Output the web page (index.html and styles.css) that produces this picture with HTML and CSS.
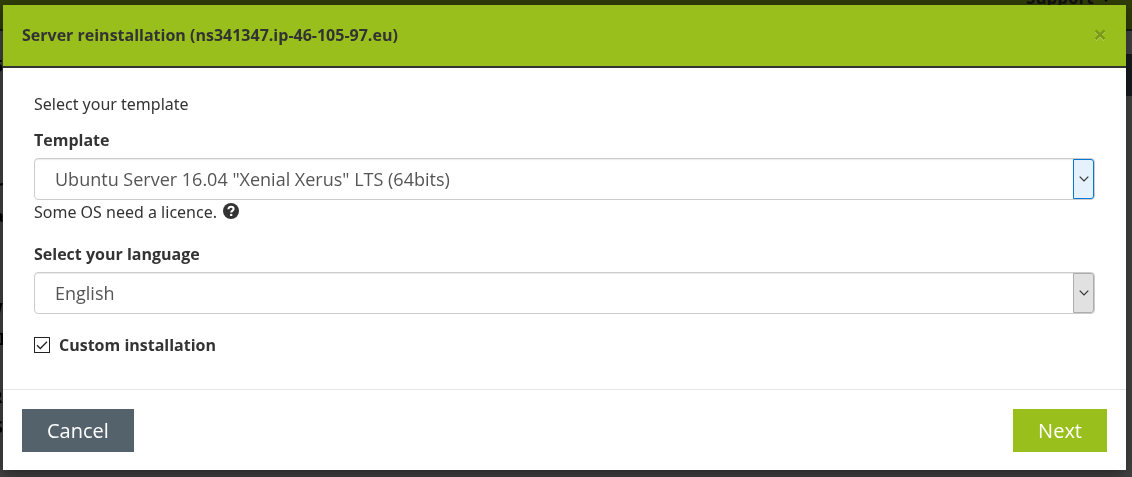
FILE: index.html
```html
<!DOCTYPE html>
<html lang="en">
<head>
<meta charset="utf-8">
<title>Server reinstallation</title>
<link rel="stylesheet" href="styles.css">
</head>
<body>
<div class="page" aria-hidden="true">
  <div class="page-nav"><span class="page-menu">Support <svg class="page-caret" viewBox="0 0 8 5"><path d="M0 0h8L4 5z"/></svg></span></div>
  <div class="page-tab"></div>
  <span class="page-text line-1">5</span>
  <span class="page-text line-2">r</span>
  <span class="page-text line-3">a</span>
  <span class="page-text line-4">W</span>
  <span class="page-text line-5">I</span>
  <span class="page-text line-6">R</span>
  <span class="page-text line-7">S</span>
</div>
<form class="modal" role="dialog" aria-labelledby="modal-title">
  <header class="modal-header">
    <h1 class="modal-title" id="modal-title">Server reinstallation (ns341347.ip-46-105-97.eu)</h1>
    <button class="close" type="button" aria-label="Close">×</button>
  </header>
  <div class="modal-body">
    <p class="intro">Select your template</p>
    <div class="field">
      <label class="label" for="template">Template</label>
      <div class="select-wrap">
        <select class="select" id="template"><option>Ubuntu Server 16.04 "Xenial Xerus" LTS (64bits)</option></select>
        <span class="arrow arrow-active"><svg class="chevron" viewBox="0 0 10 6"><path d="M0.7 0.7L5 5L9.3 0.7"/></svg></span>
      </div>
      <p class="help">Some OS need a licence.
        <svg class="help-icon" viewBox="0 0 16 16"><circle cx="8" cy="8" r="8" fill="#333"/><path d="M5.4 6.3C5.4 4.6 6.4 3.8 8 3.8S10.6 4.7 10.6 6C10.6 7.6 8.2 7.7 8.2 9.6" fill="none" stroke="#fff" stroke-width="2"/><path d="M7.1 10.9h2.2v2.1H7.1z" fill="#fff"/></svg>
      </p>
    </div>
    <div class="field">
      <label class="label" for="language">Select your language</label>
      <div class="select-wrap">
        <select class="select" id="language"><option>English</option></select>
        <span class="arrow"><svg class="chevron" viewBox="0 0 10 6"><path d="M0.7 0.7L5 5L9.3 0.7"/></svg></span>
      </div>
    </div>
    <div class="check-row">
      <span class="check">
        <input class="check-input" type="checkbox" id="custom" checked>
        <svg class="check-mark" viewBox="0 0 16 16"><path d="M3 8.2L6.3 11.5L13 4.8"/></svg>
      </span>
      <label class="check-label" for="custom">Custom installation</label>
    </div>
  </div>
  <footer class="modal-footer">
    <button class="button button-cancel" type="button">Cancel</button>
    <button class="button button-next" type="submit">Next</button>
  </footer>
</form>
</body>
</html>
```
FILE: styles.css
```css
* { box-sizing: border-box; }

body {
  margin: 0;
  padding: 5px 6px 7px 3px;
  background: #424242;
  color: #333;
  font: 16px/24px "Noto Sans", "Open Sans", sans-serif;
}

/* Dimmed page behind the dialog */
.page {
  position: fixed;
  inset: 0;
  overflow: hidden;
  color: #000;
  font-weight: bold;
}

.page-nav {
  display: flex;
  justify-content: flex-end;
  height: 31px;
  padding-right: 22px;
  border-bottom: 2px solid #191919;
  background: #303d08;
}

.page-menu { margin-top: -14px; color: #111; font-size: 17px; }
.page-caret { width: 8px; height: 5px; margin-left: 4px; vertical-align: middle; }

.page-tab {
  position: absolute;
  top: 54px;
  right: 0;
  width: 20px;
  height: 42px;
  background: #171c1e;
}

.page-text { position: absolute; left: -6px; }
.line-1 { top: 54px; }
.line-2 { top: 174px; left: -4px; }
.line-3 { top: 204px; }
.line-4 { top: 297px; left: -13px; }
.line-5 { top: 327px; left: -1px; }
.line-6 { top: 385px; left: -8px; }
.line-7 { top: 415px; }

.modal {
  position: relative;
  background: #fff;
  box-shadow: 0 5px 15px rgba(0, 0, 0, 0.4);
}

.modal-header {
  display: flex;
  align-items: center;
  justify-content: space-between;
  height: 63px;
  padding: 0 19px 2px;
  border-bottom: 2px solid #333;
  background: #99bf1c;
}

.modal-title,
.label,
.check-label {
  font: bold 16px/24px "Open Sans", "Noto Sans", sans-serif;
}

.modal-title { margin: 0; }

.close {
  padding: 0 0 2px;
  border: 0;
  background: none;
  color: #7a9916;
  font: bold 24px/24px "Noto Sans", "Open Sans", sans-serif;
  text-shadow: 0 1px 0 #b8d260;
}

.modal-body { padding: 24px 31px 32px; }
.intro { margin: 0 0 12px; }
.field { margin-bottom: 18px; }
.label { display: block; margin-bottom: 6px; }
.select-wrap { position: relative; }

.select {
  display: block;
  width: 100%;
  height: 42px;
  padding: 0 40px 0 20px;
  border: 1px solid #ccc;
  border-radius: 4px;
  appearance: none;
  background: #fff;
  box-shadow: inset 0 1px 1px rgba(0, 0, 0, 0.08);
  color: #555;
  font: 18px/24px "Open Sans", "Noto Sans", sans-serif;
}

.arrow {
  position: absolute;
  top: 1px;
  right: 1px;
  bottom: 1px;
  display: flex;
  align-items: center;
  justify-content: center;
  width: 21px;
  border: 1px solid #adadad;
  border-radius: 0 3px 3px 0;
  background: #e1e1e1;
  pointer-events: none;
}

.arrow-active { border-color: #0078d7; background: #e5f1fb; }
.chevron { width: 10px; height: 6px; fill: none; stroke: #333; stroke-width: 1.2; }

.help { margin: 0; }
.help-icon { width: 16px; height: 16px; margin-left: 2px; vertical-align: -1px; }

.check-row { display: flex; align-items: center; gap: 9px; padding-top: 1px; }
.check { position: relative; display: flex; }

.check-input {
  width: 16px;
  height: 16px;
  margin: 0;
  border: 1px solid #222;
  appearance: none;
  background: #fff;
}

.check-mark {
  position: absolute;
  inset: 0;
  fill: none;
  stroke: #222;
  stroke-width: 1.3;
  pointer-events: none;
}

.check-input:not(:checked) + .check-mark { display: none; }

.modal-footer {
  display: flex;
  justify-content: space-between;
  padding: 19px 19px 18px;
  border-top: 1px solid #e5e5e5;
}

.button {
  padding: 8px 25px;
  border: 0;
  color: #fff;
  font: 20px/27px "Open Sans", "Noto Sans", sans-serif;
}

.button-cancel { background: #54626c; }
.button-next { background: #99bf1c; }
```
